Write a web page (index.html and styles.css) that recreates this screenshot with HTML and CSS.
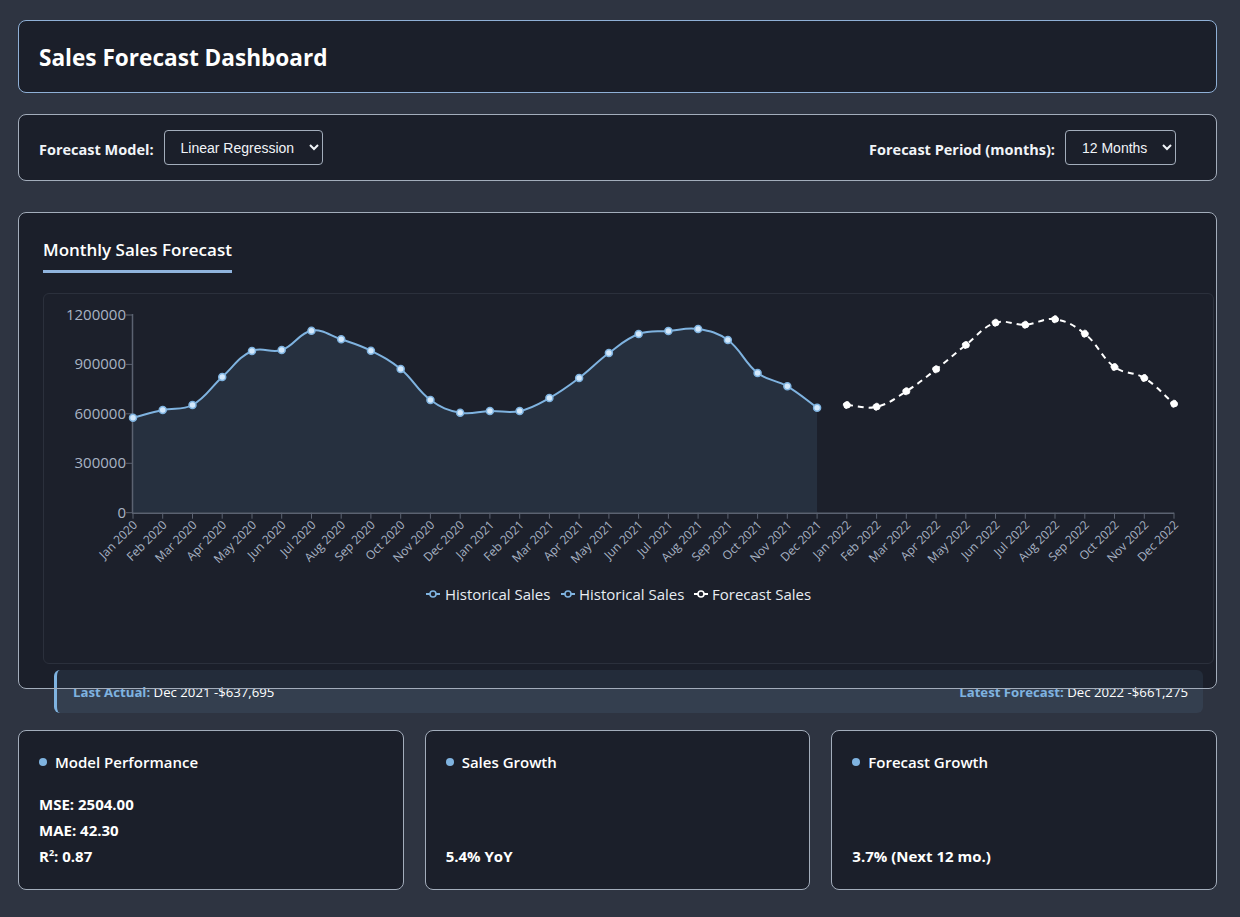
FILE: index.html
```html
<!DOCTYPE html>
<html lang="en">
<head>
<meta charset="utf-8">
<title>Sales Forecast Dashboard</title>
<link rel="stylesheet" href="styles.css">
</head>
<body>
<div class="page">
  <header class="card header-card">
    <h1 class="page-title">Sales Forecast Dashboard</h1>
  </header>

  <section class="card controls">
    <div class="control-group">
      <label class="control-label" for="model">Forecast Model:</label>
      <select id="model" class="control-select">
        <option>Linear Regression</option>
        <option>ARIMA</option>
        <option>Prophet</option>
      </select>
    </div>
    <div class="control-group">
      <label class="control-label" for="period">Forecast Period (months):</label>
      <select id="period" class="control-select">
        <option>12 Months</option>
        <option>6 Months</option>
        <option>24 Months</option>
      </select>
    </div>
  </section>

  <section class="card chart-card">
    <h2 class="section-title">Monthly Sales Forecast</h2>
    <div class="chart-box" id="chart"></div>
    <div class="info-bar">
      <div class="info-item"><span class="info-key">Last Actual:</span> Dec 2021 -$637,695</div>
      <div class="info-item"><span class="info-key">Latest Forecast:</span> Dec 2022 -$661,275</div>
    </div>
  </section>

  <section class="stats">
    <div class="card stat-card">
      <h3 class="stat-title"><span class="dot"></span>Model Performance</h3>
      <div class="stat-body">
        <div class="stat-line">MSE: 2504.00</div>
        <div class="stat-line">MAE: 42.30</div>
        <div class="stat-line">R<sup class="sup">2</sup>: 0.87</div>
      </div>
    </div>
    <div class="card stat-card">
      <h3 class="stat-title"><span class="dot"></span>Sales Growth</h3>
      <div class="stat-body">
        <div class="stat-line">5.4% YoY</div>
      </div>
    </div>
    <div class="card stat-card">
      <h3 class="stat-title"><span class="dot"></span>Forecast Growth</h3>
      <div class="stat-body">
        <div class="stat-line">3.7% (Next 12 mo.)</div>
      </div>
    </div>
  </section>
</div>
<script src="script.js"></script>
</body>
</html>
```

FILE: styles.css
```css
* { box-sizing: border-box; }

html, body {
  margin: 0;
  padding: 0;
  background: #2e3441;
  color: #f1f4f8;
  font-family: "Open Sans", "Noto Sans", sans-serif;
}

.page {
  padding: 20px 23px 20px 18px;
  width: 1240px;
}

.card {
  background: #1b1f2a;
  border: 1px solid #a3adbb;
  border-radius: 8px;
}

.header-card {
  border-color: #8fb0d6;
  padding: 0 20px;
  height: 73px;
  display: flex;
  align-items: center;
  margin-bottom: 21px;
}

.page-title {
  margin: 0;
  padding-top: 2px;
  font-size: 22.6px;
  font-weight: 700;
  color: #ffffff;
  letter-spacing: 0;
}

.controls {
  height: 67px;
  display: flex;
  align-items: center;
  justify-content: space-between;
  padding: 0 40px 0 20px;
  margin-bottom: 31px;
}

.control-group {
  display: flex;
  align-items: center;
  gap: 10px;
}

.control-label {
  font-size: 14.5px;
  font-weight: 700;
  color: #f1f4f8;
  padding-top: 3px;
}

.control-select {
  color-scheme: dark;
  height: 35px;
  background: #1b1f2a;
  color: #f1f4f8;
  border: 1px solid #a3adbb;
  border-radius: 4px;
  font-family: "Liberation Sans", Arial, sans-serif;
  font-size: 14px;
  padding: 0 8px 0 12px;
}

#model { width: 159px; }
#period { width: 111px; }

.chart-card {
  position: relative;
  border-color: transparent;
  padding: 24px 2px 24px 24px;
  margin-bottom: 41px;
}

.chart-card::after {
  content: "";
  position: absolute;
  inset: -1px;
  border: 1px solid #a3adbb;
  border-radius: 8px;
  pointer-events: none;
  z-index: 2;
}

.section-title {
  display: inline-block;
  margin: 0 0 20px;
  font-size: 17px;
  line-height: 25px;
  font-weight: 600;
  color: #ffffff;
  padding-bottom: 8px;
  border-bottom: 3px solid #90b4dd;
}

.chart-box {
  height: 371px;
  border: 1px solid #2b303c;
  border-radius: 6px;
  background: #1c202b;
}

.chart-svg {
  display: block;
  font-family: "Open Sans", "Noto Sans", sans-serif;
}

.tick-y { fill: #a8b3c4; font-size: 15px; }
.tick-x { fill: #a8b3c4; font-size: 12px; }
.legend-text { fill: #e8edf3; font-size: 15px; }

.info-bar {
  position: relative;
  z-index: 1;
  margin: 6px 11px -49px 11px;
  height: 43px;
  display: flex;
  align-items: center;
  justify-content: space-between;
  padding: 0 15px 0 16px;
  background: rgba(127, 179, 224, 0.09);
  border-left: 3px solid #7fb3e0;
  border-radius: 6px;
  font-size: 13.2px;
  color: #ffffff;
}

.info-key {
  font-weight: 700;
  color: #7fb3e0;
}

.stats {
  display: grid;
  grid-template-columns: repeat(3, 1fr);
  gap: 21px;
}

.stat-card {
  height: 160px;
  padding: 20px 24px 20px 20px;
  display: flex;
  flex-direction: column;
  justify-content: space-between;
}

.stat-title {
  margin: 0;
  display: flex;
  align-items: center;
  gap: 8px;
  font-size: 15px;
  line-height: 22px;
  font-weight: 600;
  color: #ffffff;
}

.dot {
  width: 8px;
  height: 8px;
  border-radius: 50%;
  background: #7fb3e0;
}

.stat-line {
  font-size: 15px;
  line-height: 26px;
  font-weight: 700;
  color: #ffffff;
}

.sup {
  font-size: 9px;
  vertical-align: 6px;
  line-height: 0;
}
```

FILE: script.js
```js
(function () {
  var months = ['Jan','Feb','Mar','Apr','May','Jun','Jul','Aug','Sep','Oct','Nov','Dec'];
  var labels = [];
  [2020, 2021, 2022].forEach(function (y) {
    months.forEach(function (m) { labels.push(m + ' ' + y); });
  });
  var hist = [576600,623400,653700,823700,981500,987500,1104700,1052500,983300,872200,684000,607000,
              617000,617000,696000,817600,969000,1084700,1103000,1115000,1048000,848000,767000,637695];
  var fc = [653700,643000,737000,870000,1018000,1153000,1141000,1174000,1086500,884000,817600,661275];

  var W = 1169, H = 369;
  var x0 = 89, step = (1174 - 133) / 35;
  var yb = 218.7, ys = 197.7 / 1200000;
  function X(i) { return x0 + i * step; }
  function Y(v) { return yb - v * ys; }

  function spline(pts, t) {
    var cps = pts.map(function (p, i) {
      var prev = pts[i - 1] || p, next = pts[i + 1] || p;
      var d01 = Math.hypot(p.x - prev.x, p.y - prev.y);
      var d12 = Math.hypot(next.x - p.x, next.y - p.y);
      var s01 = d01 / (d01 + d12), s12 = d12 / (d01 + d12);
      if (isNaN(s01)) s01 = 0;
      if (isNaN(s12)) s12 = 0;
      var fa = t * s01, fb = t * s12;
      return {
        px: p.x - fa * (next.x - prev.x), py: p.y - fa * (next.y - prev.y),
        nx: p.x + fb * (next.x - prev.x), ny: p.y + fb * (next.y - prev.y)
      };
    });
    var d = 'M' + pts[0].x.toFixed(2) + ',' + pts[0].y.toFixed(2);
    for (var i = 1; i < pts.length; i++) {
      d += ' C' + cps[i - 1].nx.toFixed(2) + ',' + cps[i - 1].ny.toFixed(2) + ' ' +
           cps[i].px.toFixed(2) + ',' + cps[i].py.toFixed(2) + ' ' +
           pts[i].x.toFixed(2) + ',' + pts[i].y.toFixed(2);
    }
    return d;
  }

  var hp = hist.map(function (v, i) { return { x: X(i), y: Y(v) }; });
  var fp = fc.map(function (v, i) { return { x: X(i + 24), y: Y(v) }; });

  var s = '<svg class="chart-svg" width="' + W + '" height="' + H + '" viewBox="0 0 ' + W + ' ' + H + '">';

  // area
  var hpath = spline(hp, 0.4);
  s += '<path d="' + hpath + ' L' + hp[hp.length - 1].x.toFixed(2) + ',' + yb + ' L' + hp[0].x.toFixed(2) + ',' + yb + ' Z" fill="rgba(127,179,224,0.11)"/>';

  // axes
  s += '<line x1="88.5" y1="20" x2="88.5" y2="' + (yb + 0.5) + '" stroke="#5b6271" stroke-width="1.5"/>';
  s += '<line x1="88" y1="' + (yb + 0.5) + '" x2="' + X(35).toFixed(1) + '" y2="' + (yb + 0.5) + '" stroke="#5b6271" stroke-width="1.5"/>';

  // y ticks
  [0, 300000, 600000, 900000, 1200000].forEach(function (v) {
    var y = Y(v);
    s += '<line x1="82" y1="' + y.toFixed(1) + '" x2="89" y2="' + y.toFixed(1) + '" stroke="#5b6271" stroke-width="1"/>';
    s += '<text class="tick-y" x="82" y="' + (y + 5).toFixed(1) + '" text-anchor="end">' + v + '</text>';
  });

  // x ticks
  labels.forEach(function (l, i) {
    var x = X(i);
    s += '<line x1="' + x.toFixed(1) + '" y1="' + yb + '" x2="' + x.toFixed(1) + '" y2="' + (yb + 6) + '" stroke="#5b6271" stroke-width="1"/>';
    var ax = x + 5, ay = yb + 13;
    s += '<text class="tick-x" x="' + ax.toFixed(1) + '" y="' + ay.toFixed(1) + '" text-anchor="end" transform="rotate(-45 ' + ax.toFixed(1) + ' ' + ay.toFixed(1) + ')">' + l + '</text>';
  });

  // historical line
  s += '<path d="' + hpath + '" fill="none" stroke="#7fb3e0" stroke-width="2"/>';
  hp.forEach(function (p) {
    s += '<circle cx="' + p.x.toFixed(2) + '" cy="' + p.y.toFixed(2) + '" r="3.5" fill="#d3e8fb" stroke="#7fb3e0" stroke-width="1.5"/>';
  });

  // forecast line
  s += '<path d="' + spline(fp, 0.4) + '" fill="none" stroke="#ffffff" stroke-width="2" stroke-dasharray="6 5"/>';
  fp.forEach(function (p) {
    s += '<circle cx="' + p.x.toFixed(2) + '" cy="' + p.y.toFixed(2) + '" r="3.5" fill="#ffffff" stroke="#ffffff" stroke-width="1" stroke-dasharray="3 2"/>';
  });

  // legend
  var ly = 300;
  var items = [
    { mx: 382, tx: 401, c: '#7fb3e0', fill: '#1c202b', t: 'Historical Sales' },
    { mx: 517, tx: 535, c: '#7fb3e0', fill: '#1c202b', t: 'Historical Sales' },
    { mx: 650, tx: 668, c: '#ffffff', fill: '#1c202b', t: 'Forecast Sales' }
  ];
  items.forEach(function (it) {
    s += '<line x1="' + it.mx + '" y1="' + ly + '" x2="' + (it.mx + 14) + '" y2="' + ly + '" stroke="' + it.c + '" stroke-width="2"/>';
    s += '<circle cx="' + (it.mx + 7) + '" cy="' + ly + '" r="3" fill="' + it.fill + '" stroke="' + it.c + '" stroke-width="1.6"/>';
    s += '<text class="legend-text" x="' + it.tx + '" y="' + (ly + 5.5) + '">' + it.t + '</text>';
  });

  s += '</svg>';
  document.getElementById('chart').innerHTML = s;
})();
```
